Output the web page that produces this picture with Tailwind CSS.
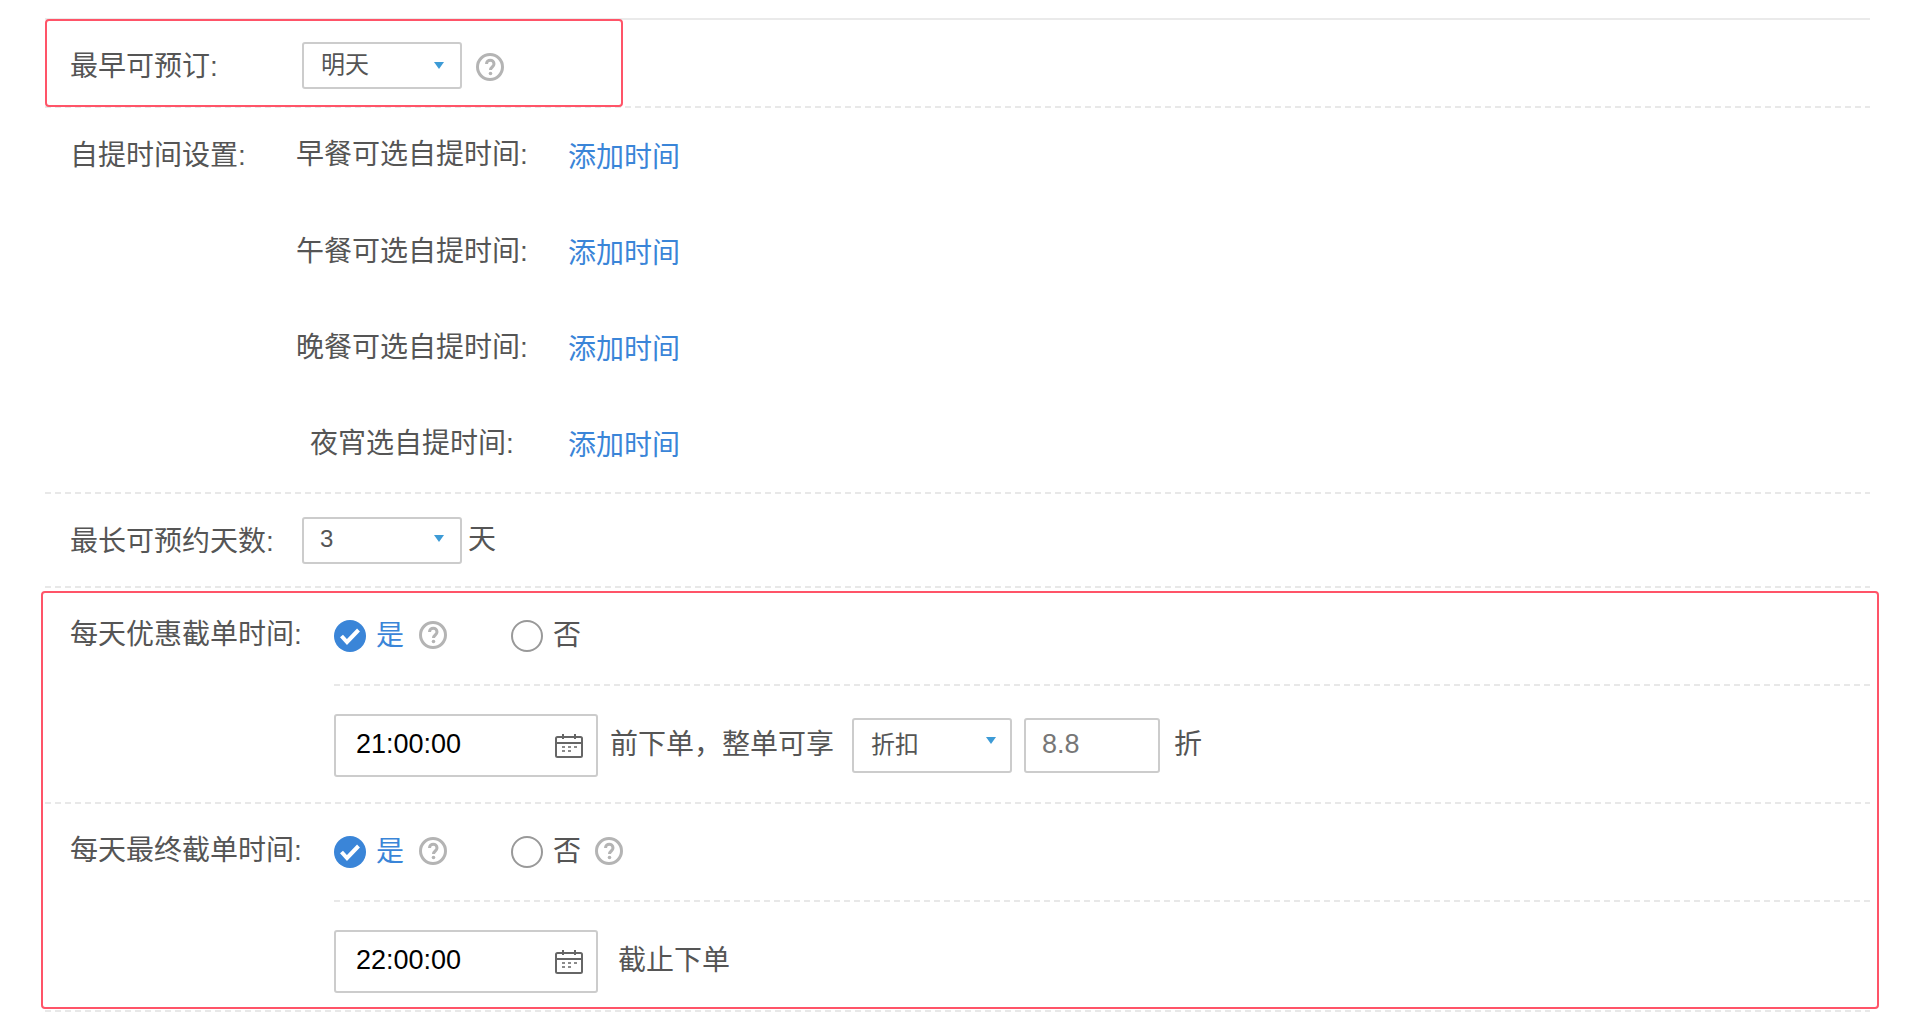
<!DOCTYPE html>
<html lang="zh-CN">
<head>
  <meta charset="UTF-8">
  <title>预订设置</title>
  <script src="https://cdn.jsdelivr.net/npm/@tailwindcss/browser@4"></script>
</head>
<body class="bg-white font-['Liberation_Sans','Noto_Sans_CJK_SC',sans-serif] text-[28px] text-[#555]">
  <div class="relative h-[1020px] w-[1912px] overflow-hidden pt-[18px] pl-[45px]">
    <div class="w-[1825px]">
      <div class="h-[2px] bg-[#eaeaea]"></div>

      <!-- earliest booking -->
      <div class="flex h-[86px] items-center pl-[25px]">
        <span class="w-[232px] pt-[8px]">最早可预订:</span>
        <div class="mt-[5px] flex h-[47px] w-[160px] items-center justify-between rounded-[3px] border-2 border-[#ccc] pr-[16px] pb-[1px] pl-[17px] text-[24px]">
          <span>明天</span>
          <span class="h-0 w-0 border-x-[5px] border-t-[7px] border-x-transparent border-t-[#3d9bd6]"></span>
        </div>
        <svg class="mt-[7px] ml-[14px] blur-[0.6px]" width="28" height="28" viewBox="0 0 28 28"><circle cx="14" cy="14" r="12.5" fill="none" stroke="#b4b4b4" stroke-width="3"/><path d="M10.500 11c0-5 7.500-5 7.500 0c0 3-3.500 3-3.500 6" fill="none" stroke="#b4b4b4" stroke-width="3"/><circle cx="14.500" cy="20.500" r="1.800" fill="#b4b4b4"/></svg>
      </div>
      <div class="h-[2px] bg-[repeating-linear-gradient(90deg,#e8e8e8_0_6px,transparent_6px_10px)]"></div>

      <!-- pickup times -->
      <div class="flex pl-[25px]">
        <div class="w-[226px] pt-[27px]">自提时间设置:</div>
        <div class="flex flex-col">
          <div class="flex h-[96px] items-center">
            <span class="w-[232px] pb-[2px] text-center">早餐可选自提时间:</span>
            <a class="ml-[40px] pt-[4px] text-[#3a85d8]">添加时间</a>
          </div>
          <div class="flex h-[96px] items-center">
            <span class="w-[232px] text-center">午餐可选自提时间:</span>
            <a class="ml-[40px] pt-[4px] text-[#3a85d8]">添加时间</a>
          </div>
          <div class="flex h-[96px] items-center">
            <span class="w-[232px] text-center">晚餐可选自提时间:</span>
            <a class="ml-[40px] pt-[4px] text-[#3a85d8]">添加时间</a>
          </div>
          <div class="flex h-[96px] items-center">
            <span class="w-[232px] text-center">夜宵选自提时间:</span>
            <a class="ml-[40px] pt-[4px] text-[#3a85d8]">添加时间</a>
          </div>
        </div>
      </div>
      <div class="h-[2px] bg-[repeating-linear-gradient(90deg,#e8e8e8_0_6px,transparent_6px_10px)]"></div>

      <!-- max days -->
      <div class="flex h-[92px] items-center pl-[25px]">
        <span class="w-[232px] pt-[4px]">最长可预约天数:</span>
        <div class="flex h-[47px] w-[160px] items-center justify-between rounded-[3px] border-2 border-[#ccc] pr-[16px] pb-[3px] pl-[16px] text-[24px]">
          <span>3</span>
          <span class="h-0 w-0 border-x-[5px] border-t-[7px] border-x-transparent border-t-[#3d9bd6]"></span>
        </div>
        <span class="ml-[6px]">天</span>
      </div>
      <div class="h-[2px] bg-[repeating-linear-gradient(90deg,#e8e8e8_0_6px,transparent_6px_10px)]"></div>

      <!-- discount cutoff -->
      <div class="flex h-[96px] items-center pl-[25px]">
        <span class="w-[264px] pb-[2px]">每天优惠截单时间:</span>
        <svg width="32" height="32" viewBox="0 0 32 32"><circle cx="16" cy="16" r="16" fill="#3a85d8"/><path d="M7.500 16l5.500 6l11.500-12" fill="none" stroke="#fff" stroke-width="4"/></svg>
        <span class="ml-[10px] text-[#3a85d8]">是</span>
        <svg class="mb-[2px] ml-[15px] blur-[0.6px]" width="28" height="28" viewBox="0 0 28 28"><circle cx="14" cy="14" r="12.5" fill="none" stroke="#b4b4b4" stroke-width="3"/><path d="M10.500 11c0-5 7.500-5 7.500 0c0 3-3.500 3-3.500 6" fill="none" stroke="#b4b4b4" stroke-width="3"/><circle cx="14.500" cy="20.500" r="1.800" fill="#b4b4b4"/></svg>
        <span class="ml-[64px] h-[32px] w-[32px] rounded-full border-2 border-[#999]"></span>
        <span class="ml-[10px]">否</span>
      </div>
      <div class="ml-[289px] h-[2px] bg-[repeating-linear-gradient(90deg,#e8e8e8_0_6px,transparent_6px_10px)]"></div>

      <div class="flex h-[116px] items-center pt-[3px] pl-[289px]">
        <div class="flex h-[63px] w-[264px] items-center justify-between rounded-[3px] border-2 border-[#ccc] pr-[13px] pl-[20px] text-[27px] text-black">
          <span class="pb-[2px]">21:00:00</span>
          <svg width="28" height="24" viewBox="0 0 28 24" fill="none" stroke="#666" stroke-width="2"><rect x="1" y="3" width="26" height="20" rx="1.500"/><path d="M1 9h26M8 0v5M20 0v5"/><path d="M7 13h3M13 13h3M19 13h3M7 17h3M13 17h3" stroke-width="1.500"/></svg>
        </div>
        <span class="ml-[12px] pb-[2px]">前下单，整单可享</span>
        <div class="ml-[18px] flex h-[55px] w-[160px] items-center justify-between rounded-[3px] border-2 border-[#ccc] pr-[14px] pb-[2px] pl-[17px] text-[24px]">
          <span>折扣</span>
          <span class="mb-[8px] h-0 w-0 border-x-[5px] border-t-[7px] border-x-transparent border-t-[#3d9bd6]"></span>
        </div>
        <div class="ml-[12px] flex h-[55px] w-[136px] items-center rounded-[3px] border-2 border-[#ccc] pb-[2px] pl-[16px] text-[27px] text-[#777]">8.8</div>
        <span class="ml-[14px] pb-[2px]">折</span>
      </div>
      <div class="h-[2px] bg-[repeating-linear-gradient(90deg,#e8e8e8_0_6px,transparent_6px_10px)]"></div>

      <!-- final cutoff -->
      <div class="flex h-[96px] items-center pl-[25px]">
        <span class="w-[264px] pb-[2px]">每天最终截单时间:</span>
        <svg width="32" height="32" viewBox="0 0 32 32"><circle cx="16" cy="16" r="16" fill="#3a85d8"/><path d="M7.500 16l5.500 6l11.500-12" fill="none" stroke="#fff" stroke-width="4"/></svg>
        <span class="ml-[10px] text-[#3a85d8]">是</span>
        <svg class="mb-[2px] ml-[15px] blur-[0.6px]" width="28" height="28" viewBox="0 0 28 28"><circle cx="14" cy="14" r="12.5" fill="none" stroke="#b4b4b4" stroke-width="3"/><path d="M10.500 11c0-5 7.500-5 7.500 0c0 3-3.500 3-3.500 6" fill="none" stroke="#b4b4b4" stroke-width="3"/><circle cx="14.500" cy="20.500" r="1.800" fill="#b4b4b4"/></svg>
        <span class="ml-[64px] h-[32px] w-[32px] rounded-full border-2 border-[#999]"></span>
        <span class="ml-[10px]">否</span>
        <svg class="mb-[2px] ml-[14px] blur-[0.6px]" width="28" height="28" viewBox="0 0 28 28"><circle cx="14" cy="14" r="12.5" fill="none" stroke="#b4b4b4" stroke-width="3"/><path d="M10.500 11c0-5 7.500-5 7.500 0c0 3-3.500 3-3.500 6" fill="none" stroke="#b4b4b4" stroke-width="3"/><circle cx="14.500" cy="20.500" r="1.800" fill="#b4b4b4"/></svg>
      </div>
      <div class="ml-[289px] h-[2px] bg-[repeating-linear-gradient(90deg,#e8e8e8_0_6px,transparent_6px_10px)]"></div>

      <div class="flex h-[108px] items-center pt-[11px] pl-[289px]">
        <div class="flex h-[63px] w-[264px] items-center justify-between rounded-[3px] border-2 border-[#ccc] pr-[13px] pl-[20px] text-[27px] text-black">
          <span class="pb-[2px]">22:00:00</span>
          <svg width="28" height="24" viewBox="0 0 28 24" fill="none" stroke="#666" stroke-width="2"><rect x="1" y="3" width="26" height="20" rx="1.500"/><path d="M1 9h26M8 0v5M20 0v5"/><path d="M7 13h3M13 13h3M19 13h3M7 17h3M13 17h3" stroke-width="1.500"/></svg>
        </div>
        <span class="ml-[20px] pb-[2px]">截止下单</span>
      </div>
      <div class="h-[2px] bg-[repeating-linear-gradient(90deg,#e8e8e8_0_6px,transparent_6px_10px)]"></div>
    </div>

    <!-- red annotation boxes over the form -->
    <div class="absolute top-[19px] left-[45px] h-[88px] w-[578px] rounded-[4px] border-2 border-[#ff5468]"></div>
    <div class="absolute top-[591px] left-[41px] h-[418px] w-[1838px] rounded-[4px] border-2 border-[#ff5468]"></div>
  </div>
</body>
</html>
